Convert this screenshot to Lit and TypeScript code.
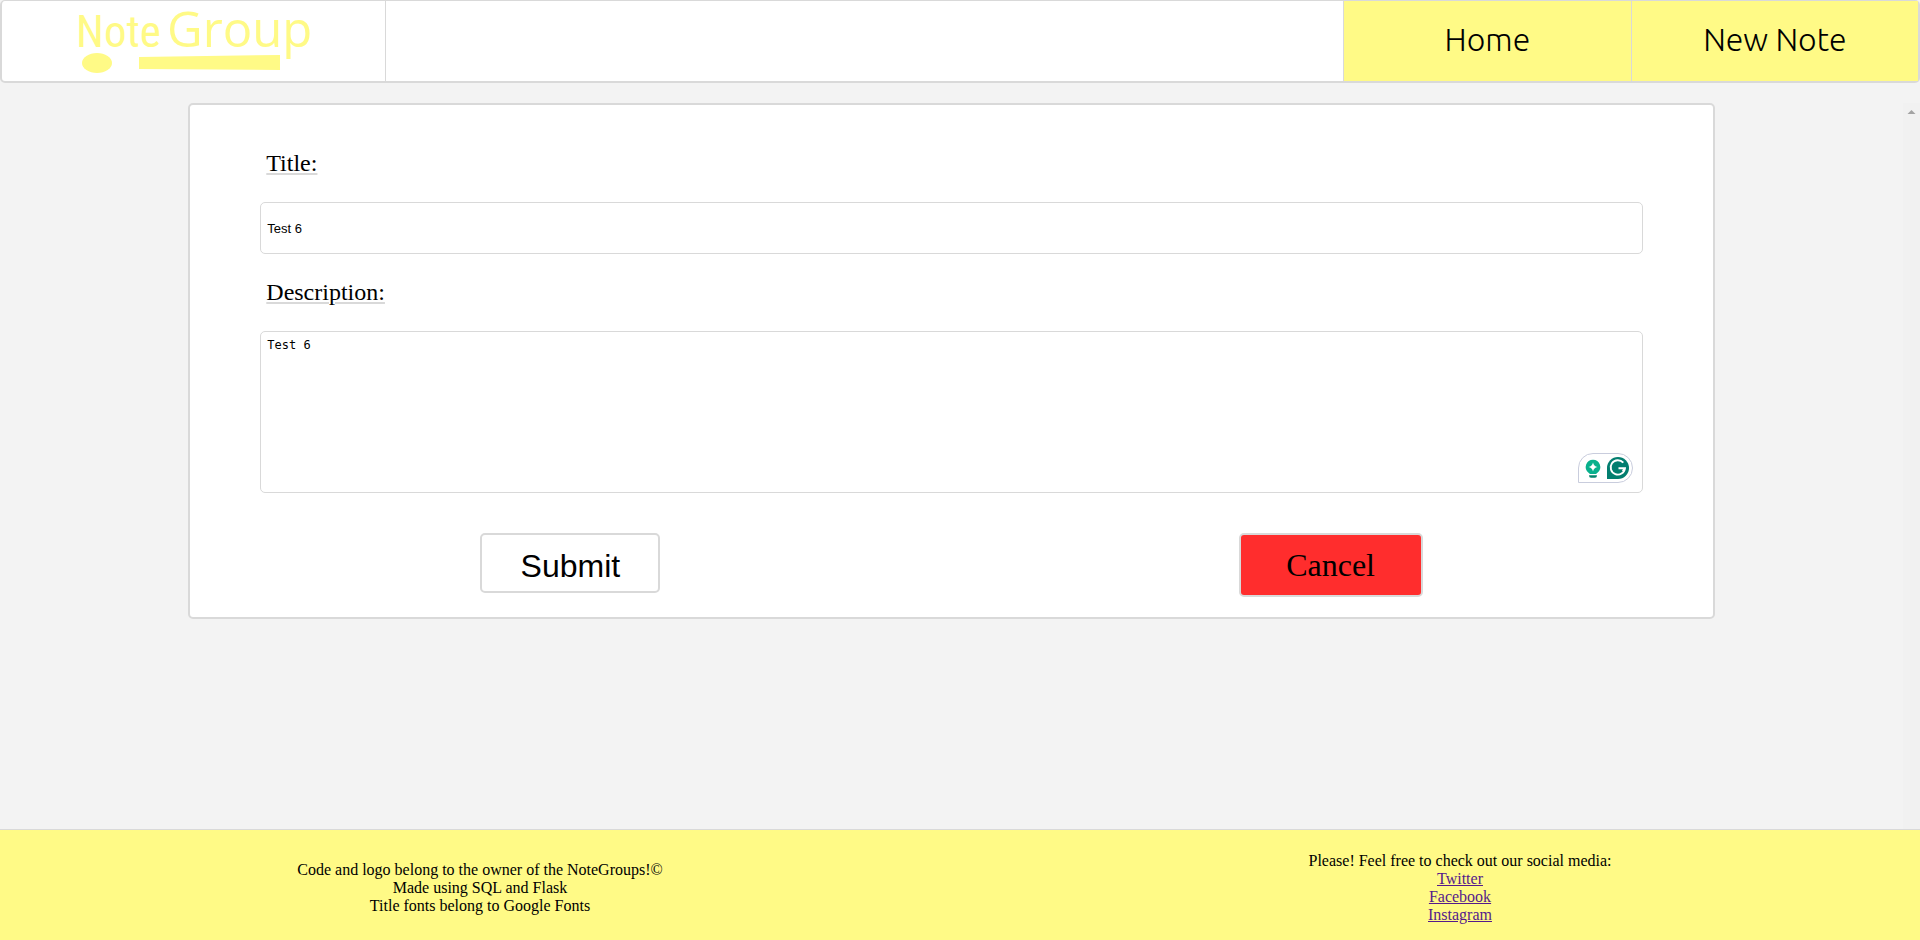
import { LitElement, html, css } from "lit";
import { customElement } from "lit/decorators.js";

@customElement("note-logo")
class NoteLogo extends LitElement {
  static styles = css`
    :host { display: block; }
    svg { display: block; overflow: visible; }
    text { font-family: "Open Sans", "Noto Sans", sans-serif; }
    .narrow { font-family: "Roboto Condensed", "Open Sans Condensed", sans-serif; }
  `;
  render() {
    return html`<svg width="240" height="80" viewBox="0 0 240 80" fill="#fffa86" role="img" aria-label="Note Group">
      <text class="narrow" x="2" y="46" font-size="45">Note</text>
      <text x="93" y="46" font-size="49">Group</text>
      <ellipse cx="23" cy="62" rx="15" ry="10"></ellipse>
      <path d="M65 56 L206 54 V69 L65 68 Z"></path>
    </svg>`;
  }
}

@customElement("site-header")
class SiteHeader extends LitElement {
  static styles = css`
    :host { display: block; }
    .bar {
      display: grid;
      grid-template-columns: 20% 1fr 15% 15%;
      box-sizing: border-box;
      height: 83px;
      background: #fff;
      border: 2px solid #d9d9d9;
      border-top-width: 1px;
      border-radius: 5px;
    }
    .logo { display: flex; justify-content: center; }
    .gap { border-left: 1px solid #d9d9d9; }
    .link {
      display: flex;
      align-items: center;
      justify-content: center;
      padding-bottom: 4px;
      border-left: 1px solid #d9d9d9;
      background: #fffa86;
      color: #000;
      text-decoration: none;
      font: 300 32px "Ubuntu", "Open Sans", "Noto Sans", sans-serif;
    }
  `;
  render() {
    return html`<nav class="bar">
      <div class="logo"><note-logo></note-logo></div>
      <div class="gap"></div>
      <a class="link" href="#home">Home</a>
      <a class="link" href="#new">New Note</a>
    </nav>`;
  }
}

@customElement("writing-badge")
class WritingBadge extends LitElement {
  static styles = css`
    :host { display: block; }
    svg { display: block; }
  `;
  render() {
    return html`<svg width="55" height="30" viewBox="0 0 55 30" aria-hidden="true">
      <path d="M.5 29.500V15A14.500 14.500 0 0 1 15 .5H40A14.500 14.500 0 0 1 40 29.500Z" fill="#fff" stroke="#c9cddd"></path>
      <path d="M15 6.700a7.300 7.300 0 0 0-4.500 13q.8.600 1.300 1.300h6.400q.5-.7 1.300-1.300A7.300 7.300 0 0 0 15 6.700Z" fill="#08b08c"></path>
      <path d="M15 9.500q.8 3.700 4.500 4.500q-3.700.8-4.500 4.500q-.8-3.700-4.500-4.500q3.700-.8 4.500-4.500Z" fill="#fff"></path>
      <path d="M11 22.200h8q0 2.500-2 2.500h-4q-2 0-2-2.500Z" fill="#04856c"></path>
      <path d="M29 26V15a11 11 0 1 1 11 11Z" fill="#027e6f"></path>
      <path d="M45.300 9.700A7.200 7.200 0 1 0 47 15.200H40.500M47 14.800L44.800 18.300" fill="none" stroke="#fff" stroke-width="1.900"></path>
    </svg>`;
  }
}

@customElement("note-form")
class NoteForm extends LitElement {
  static styles = css`
    :host { display: block; }
    .card {
      display: flex;
      flex-direction: column;
      width: 80%;
      margin: 0 auto;
      padding: 44px 0 20px;
      background: #fff;
      border: 2px solid #d9d9d9;
      border-radius: 5px;
    }
    .field { display: flex; flex-direction: column; padding: 0 70px; }
    .label {
      align-self: flex-start;
      margin: 0 6px 25px;
      font: 24px/28px "Liberation Serif", serif;
      text-decoration: underline #d9d9d9 2px;
      text-underline-offset: 2px;
    }
    .input, .area {
      box-sizing: border-box;
      width: 100%;
      margin: 0;
      padding: 6px;
      border: 1px solid #d9d9d9;
      border-radius: 5px;
      background: #fff;
      color: #000;
      outline: none;
    }
    .input { height: 52px; margin-bottom: 24px; font: 13px "Liberation Sans", sans-serif; }
    .area {
      display: block;
      height: 162px;
      resize: none;
      font: 12px "DejaVu Sans Mono", monospace;
    }
    .wrap { position: relative; }
    .badge { position: absolute; right: 10px; bottom: 10px; }
    .actions {
      display: grid;
      grid-template-columns: 1fr 1fr;
      justify-items: center;
      align-items: start;
      margin-top: 40px;
      padding-right: 2px;
    }
    .button {
      box-sizing: border-box;
      border: 2px solid #d9d9d9;
      border-radius: 5px;
      color: #000;
      text-align: center;
      text-decoration: none;
    }
    .submit { width: 180px; height: 60px; padding: 6px 0 0; background: #fff; font: 32px "Liberation Sans", sans-serif; }
    .cancel { width: 184px; height: 64px; background: #ff2d2d; font: 32px/60px "Liberation Serif", serif; }
  `;
  render() {
    return html`<form class="card" @submit=${(e: Event) => e.preventDefault()}>
      <div class="field">
        <label class="label" for="title">Title:</label>
        <input class="input" id="title" type="text" value="Test 6">
        <label class="label" for="description">Description:</label>
        <div class="wrap">
          <textarea class="area" id="description" .value=${"Test 6"}></textarea>
          <writing-badge class="badge"></writing-badge>
        </div>
      </div>
      <div class="actions">
        <button class="button submit" type="submit">Submit</button>
        <a class="button cancel" href="#cancel">Cancel</a>
      </div>
    </form>`;
  }
}

@customElement("site-footer")
class SiteFooter extends LitElement {
  static styles = css`
    :host { display: block; }
    .footer {
      display: grid;
      grid-template-columns: 1fr 1fr;
      align-items: center;
      box-sizing: border-box;
      min-height: 111px;
      padding-top: 6px;
      border-top: 1px solid #d9d9d9;
      background: #fffa86;
      color: #000;
      font: 16px/18px "Liberation Serif", serif;
      text-align: center;
    }
    .list { margin: 0; padding: 0; list-style: none; }
    .social { padding-left: 40px; }
    .link { color: #551a8b; }
  `;
  render() {
    return html`<footer class="footer">
      <ul class="list">
        <li>Code and logo belong to the owner of the NoteGroups!©</li>
        <li>Made using SQL and Flask</li>
        <li>Title fonts belong to Google Fonts</li>
      </ul>
      <ul class="list social">
        <li>Please! Feel free to check out our social media:</li>
        ${["Twitter", "Facebook", "Instagram"].map(
          (name) => html`<li><a class="link" href="#${name.toLowerCase()}">${name}</a></li>`
        )}
      </ul>
    </footer>`;
  }
}

@customElement("app-root")
class AppRoot extends LitElement {
  static styles = css`
    :host {
      display: flex;
      flex-direction: column;
      min-height: 100vh;
      background: #f3f3f3;
    }
    .main { display: flex; flex: 1; margin-top: 20px; }
    .form { flex: 1; }
    .track { width: 17px; background: #f1f1f1; }
    .arrow { display: block; }
  `;
  render() {
    return html`
      <site-header></site-header>
      <main class="main">
        <note-form class="form"></note-form>
        <div class="track">
          <svg class="arrow" width="17" height="17" viewBox="0 0 17 17" aria-hidden="true">
            <path d="M4.500 11 L8.500 7 L12.500 11 Z" fill="#a3a3a3"></path>
          </svg>
        </div>
      </main>
      <site-footer></site-footer>
    `;
  }
}
